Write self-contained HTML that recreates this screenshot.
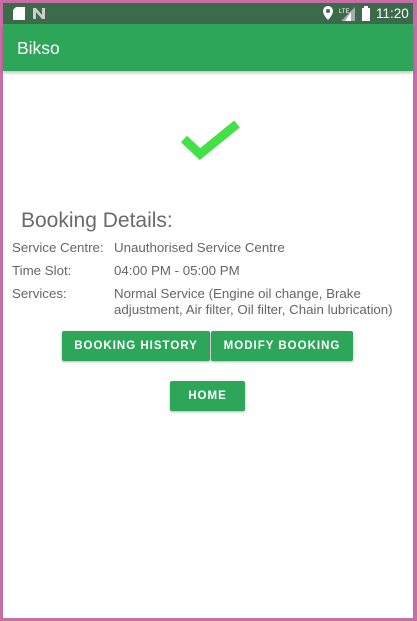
<!DOCTYPE html>
<html><head><style>
*{margin:0;padding:0;box-sizing:border-box}
body{width:417px;height:621px;background:#c86ea6;font-family:"Liberation Sans",sans-serif;position:relative;overflow:hidden}
#f{position:absolute;left:3px;top:3px;width:410px;height:615px;background:#fff}
#sb{position:absolute;left:0;top:0;width:410px;height:21px;background:#3b6b4b;color:#fff;font-size:13px}
#ab{position:absolute;left:0;top:21px;width:410px;height:47px;background:#2ea65a;box-shadow:0 2px 3px rgba(0,0,0,.25)}
#ab span{position:absolute;left:14px;top:14px;color:#fff;font-size:17.5px}
.t{position:absolute;color:#666;font-size:13.3px;line-height:16px}
.b{position:absolute;background:#2ea65a;color:#fff;font-size:11.5px;font-weight:bold;letter-spacing:1px;text-align:center;border-radius:2px;box-shadow:0 1px 2px rgba(0,0,0,.3)}
</style></head><body><div id="f">
<div id="sb">
<svg style="position:absolute;left:10px;top:4px" width="12" height="13"><path d="M3 0H12V13H0V3Z" fill="#fff"/></svg>
<svg style="position:absolute;left:30px;top:5px" width="12" height="11"><path d="M0 0H3L9 7V0H12V11H9L3 4V11H0Z" fill="#ccc"/></svg>
<svg style="position:absolute;left:320px;top:3px" width="10" height="14"><path d="M5 0A5 5 0 0 1 10 5C10 9 5 14 5 14S0 9 0 5A5 5 0 0 1 5 0Z" fill="#fff"/><circle cx="5" cy="5" r="2" fill="#3b6b4b"/></svg>
<svg style="position:absolute;left:336px;top:3px" width="16" height="15"><path d="M16 1V15H2Z" fill="#aaa"/><path d="M12 6V15H6Z" fill="#fff"/><text x="0" y="7" font-size="6" fill="#fff">LTE</text></svg>
<svg style="position:absolute;left:359px;top:3px" width="8" height="15"><path d="M2 0H6V2H8V15H0V2H2Z" fill="#fff"/></svg>
<span style="position:absolute;left:373px;top:3px;font-size:13.5px">11:20</span>
</div>
<div id="ab"><span>Bikso</span></div>
<svg style="position:absolute;left:172px;top:112px" width="70" height="50"><path d="M9 24L25 39L62 9" fill="none" stroke="#44e048" stroke-width="9"/></svg>
<div class="t" style="left:18px;top:206px;font-size:21px;line-height:24px;color:#6a6a6a">Booking Details:</div>
<div class="t" style="left:9px;top:237px">Service Centre:</div>
<div class="t" style="left:111px;top:237px">Unauthorised Service Centre</div>
<div class="t" style="left:9px;top:260px">Time Slot:</div>
<div class="t" style="left:111px;top:260px">04:00 PM - 05:00 PM</div>
<div class="t" style="left:9px;top:283px">Services:</div>
<div class="t" style="left:111px;top:283px;white-space:nowrap">Normal Service (Engine oil change, Brake<br>adjustment, Air filter, Oil filter, Chain lubrication)</div>
<div class="b" style="left:59px;top:328px;width:148px;height:30px;line-height:30px">BOOKING HISTORY</div>
<div class="b" style="left:208px;top:328px;width:142px;height:30px;line-height:30px">MODIFY BOOKING</div>
<div class="b" style="left:167px;top:378px;width:75px;height:30px;line-height:30px">HOME</div>
</div></body></html>
